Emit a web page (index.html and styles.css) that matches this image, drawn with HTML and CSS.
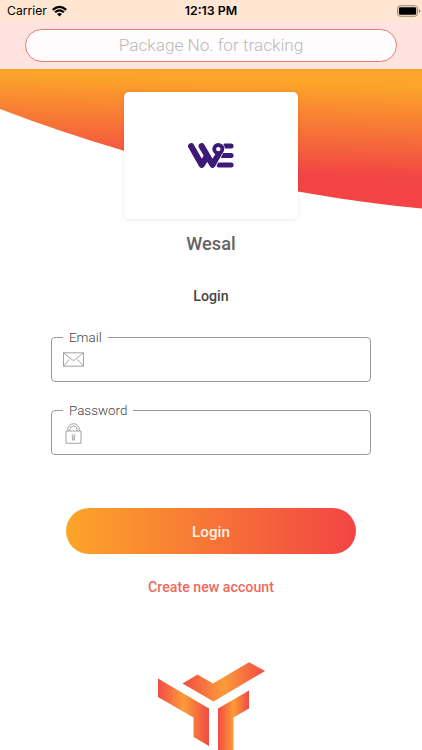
FILE: index.html
```html
<!DOCTYPE html>
<html lang="en">
<head>
<meta charset="utf-8">
<title>Wesal</title>
<link rel="stylesheet" href="styles.css">
</head>
<body>
<div class="screen">
  <div class="status">
    <div class="carrier">
      <span>Carrier</span>
      <svg class="wifi" viewBox="0 0 16 12"><g fill="none" stroke="#000" stroke-width="2.3"><path d="M.8 4.8Q8-1.6 15.2 4.8"/><path d="M3.3 7.4Q8 3.2 12.7 7.4"/></g><path d="M5.3 9.2Q8 6.9 10.7 9.2L8 11.8Z"/></svg>
    </div>
    <time class="clock">12:13 PM</time>
    <svg class="battery" viewBox="0 0 25 12"><rect x=".5" y=".5" width="21" height="11" rx="3" fill="none" stroke="#8d8178"/><rect x="2" y="2" width="18" height="8" rx="1.5"/><path d="M23 4.2q1.5.6 1.5 1.8t-1.5 1.8z" fill="#8d8178"/></svg>
  </div>
  <header class="tracking">
    <input class="search" type="text" placeholder="Package No. for tracking">
  </header>
  <main>
    <section class="hero">
      <svg class="wave" viewBox="0 69 422 140">
        <defs><linearGradient id="sun" gradientUnits="userSpaceOnUse" x1="230" y1="80" x2="227" y2="173"><stop offset="0" stop-color="#fca529"/><stop offset="1" stop-color="#f24444"/></linearGradient></defs>
        <path d="M0 69H422V208.5C280 195 130 159 0 109Z" fill="url(#sun)"/>
      </svg>
      <div class="card">
        <svg class="we" viewBox="188 143 46 26">
          <g fill="none" stroke="#3d1a78" stroke-width="6.2" stroke-linecap="round" stroke-linejoin="round">
            <path d="M191.2 146.2L201.7 164.8L206.2 157.5M201.7 146.2L212.5 164.8L219.5 153"/>
            <path d="M225 146H231.1M222 155.5H231.1M219 165.1H231.1" stroke-width="5"/>
          </g>
          <path d="M222.2 142L225 149L214.4 169" fill="none" stroke="#fff" stroke-width=".8"/>
          <circle cx="218.3" cy="149.1" r="4.1" fill="#fff" stroke="#3d1a78" stroke-width="3.8"/>
        </svg>
      </div>
    </section>
    <h1 class="brand">Wesal</h1>
    <h2 class="title">Login</h2>
    <form class="form">
      <fieldset class="field">
        <legend>Email</legend>
        <svg class="mail" viewBox="0 0 21 15"><path d="M.5.8H20.5V14.2H.5ZM.5.8L10.5 8.7L20.5.8M.5 14.2L6.5 7.5M20.5 14.2L14.5 7.5"/></svg>
      </fieldset>
      <fieldset class="field">
        <legend>Password</legend>
        <svg class="lock" viewBox="0 0 17 21"><path d="M1 8H16V20.3H1ZM2.7 8V6.5a5.8 5.8 0 0 1 11.6 0V8M4.9 8V6.5a3.6 3.6 0 0 1 7.2 0V8"/><circle cx="8.5" cy="13" r="1.4"/><path d="M7.8 14.3L7.4 17H9.6L9.2 14.3"/></svg>
      </fieldset>
      <button class="submit" type="button">Login</button>
    </form>
    <a class="create">Create new account</a>
    <svg class="mark" viewBox="158 662 108 88">
      <defs><linearGradient id="blade"><stop offset="0" stop-color="#f24a43"/><stop offset=".5" stop-color="#fb9c38"/><stop offset="1" stop-color="#f24a43"/></linearGradient></defs>
      <g fill="url(#blade)">
        <path d="M182.5 683.5L197.5 674.5L213 683.5L249 662.3L265 671L213.5 701.5Z"/>
        <path d="M158 678.5L209 708.5V746L193.5 737V717.5L158 697Z"/>
        <path d="M218 708.5L249 690.5V708.5L233.5 717.5V764L218 773Z"/>
      </g>
    </svg>
  </main>
</div>
</body>
</html>
```
FILE: styles.css
```css
* { box-sizing: border-box; }
body { margin: 0; background: #fff; font-family: Roboto, "Liberation Sans", sans-serif; }
.screen { width: 422px; height: 750px; overflow: hidden; background: #fff; }
.status {
  height: 21px;
  padding: 0 7px;
  display: grid;
  grid-template-columns: 1fr auto 1fr;
  align-items: center;
  background: #ffe6d3;
  color: #000;
  font: 12.2px/22px Inter, sans-serif;
}
.carrier { display: flex; align-items: center; gap: 5px; }
.wifi { width: 15px; height: 12px; }
.clock { font-weight: 600; font-size: 12.4px; }
.battery { width: 24px; height: 12px; justify-self: end; margin-right: -6px; }
.tracking { height: 48px; padding: 8px 25px 0; background: #fee3de; }
.search {
  display: block;
  width: 372px;
  height: 33px;
  padding: 0 0 2px;
  border: 1px solid #e97c75;
  border-radius: 17px;
  background: #fffcfd;
  text-align: center;
  font: 300 17.2px Roboto, sans-serif;
}
.search::placeholder { color: #b9b9bb; opacity: 1; }
main { display: flex; flex-direction: column; align-items: center; }
.hero { display: grid; width: 422px; height: 151px; justify-items: center; }
.wave, .card { grid-area: 1 / 1; }
.wave { width: 422px; height: 140px; }
.card {
  width: 174px;
  height: 127px;
  margin-top: 23px;
  border-radius: 5px;
  background: #fff;
  box-shadow: 0 1px 4px rgba(0, 0, 0, .09);
  display: grid;
  place-items: center;
}
.we { width: 46px; height: 26px; }
.brand { margin: 13px 0 0; font-size: 18.2px; line-height: 22px; font-weight: 500; color: #636363; }
.title { margin: 32px 0 0; font-size: 14.2px; line-height: 18px; font-weight: 500; color: #454545; }
.form { width: 320px; margin-top: 24px; display: flex; flex-direction: column; align-items: center; }
.field {
  width: 320px;
  height: 53px;
  margin: 0 0 20px;
  padding: 5px 11px 0;
  border: 1px solid #999;
  border-radius: 4px;
}
.field legend { padding: 0 6px; font-size: 13.4px; line-height: 17px; font-weight: 300; color: #444; }
.field svg { display: block; fill: none; stroke: #929292; stroke-width: .85; }
.mail { width: 21px; height: 15px; margin-top: 1px; }
.lock { width: 17px; height: 21px; margin: -1px 0 0 2px; }
.submit {
  width: 290px;
  height: 46px;
  margin-top: 33px;
  padding: 2px 0 0;
  border: 0;
  border-radius: 23px;
  background: linear-gradient(90deg, #fca529, #f24444);
  color: #fff1e7;
  font: 500 15.2px Roboto, sans-serif;
}
.create { margin-top: 24px; font-size: 14.2px; line-height: 18px; font-weight: 500; color: #ee6a5d; }
.mark { width: 108px; height: 88px; margin: 66px 0 0 2px; }
```
